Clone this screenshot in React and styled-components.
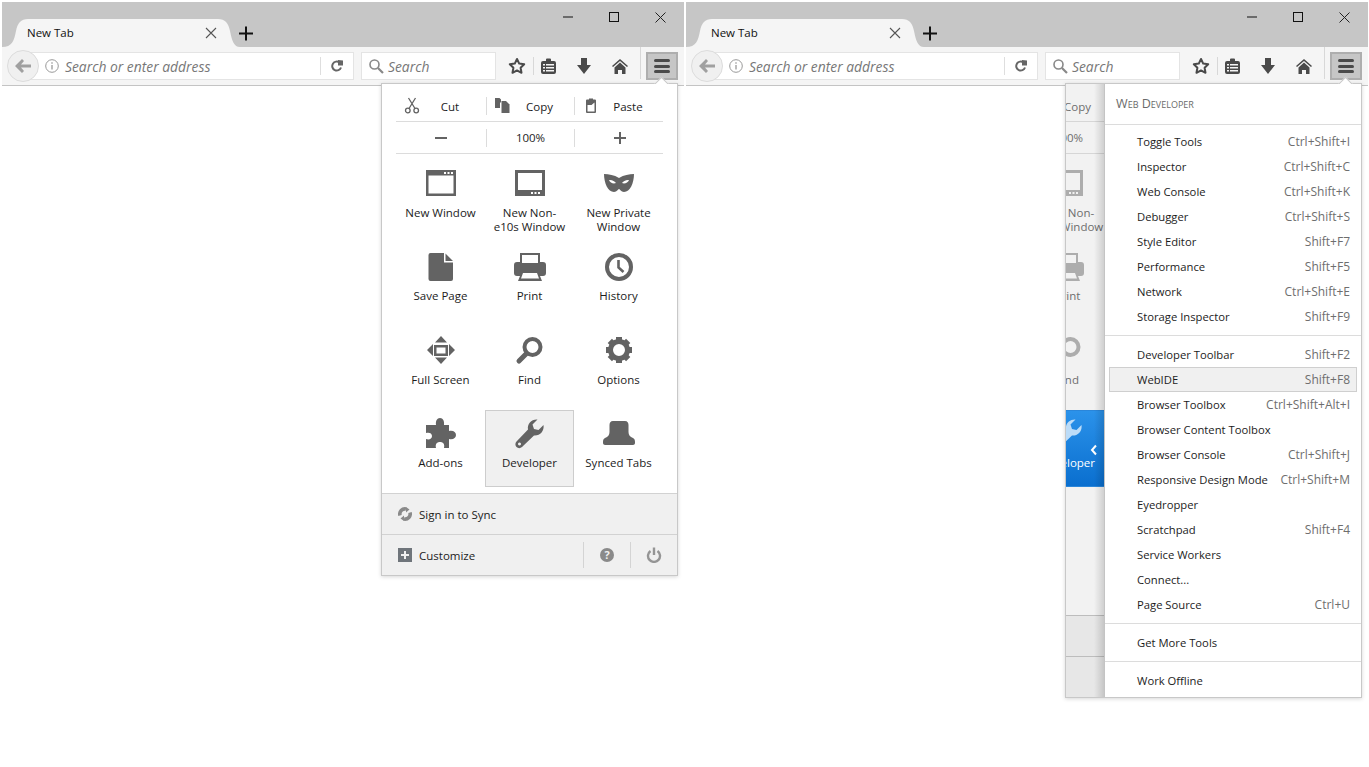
import React from "react";
import styled, { createGlobalStyle } from "styled-components";

const Global = createGlobalStyle`
  html, body { margin: 0; padding: 0; background: #fff; }
  body { font-family: "Open Sans", "Noto Sans", "Liberation Sans", sans-serif; font-size: 11.5px; color: #1c1c1c; overflow: hidden; }
  * { box-sizing: border-box; }
`;

const Page = styled.div`
  display: flex;
  gap: 2px;
  padding: 2px 0 0 2px;
  width: 1369px;
  height: 767px;
`;
const Win = styled.div`
  position: relative;
  width: 682px;
  height: 84px;
`;
const TitleBar = styled.div`
  display: flex;
  height: 45px;
  background: #c6c6c6;
`;
const Tab = styled.div`
  position: relative;
  align-self: flex-end;
  width: 237px;
  height: 28px;
  display: flex;
  align-items: center;
  justify-content: space-between;
  padding: 0 22px 1px 25px;
  font-size: 11.5px;
  color: #111;
`;
const TabShape = styled.svg`
  position: absolute;
  left: 0;
  top: 0;
  z-index: 0;
`;
const TabText = styled.span`
  position: relative;
`;
const TabClose = styled.svg`
  position: relative;
  display: block;
`;
const NewTab = styled.svg`
  align-self: flex-end;
  margin: 0 0 6px 0;
  display: block;
`;
const Controls = styled.div`
  margin: 0 1px 0 auto;
  display: flex;
`;
const Ctl = styled.div`
  width: 46px;
  height: 30px;
  display: flex;
  align-items: center;
  justify-content: center;
`;
const Toolbar = styled.div`
  display: flex;
  align-items: flex-start;
  height: 39px;
  padding: 5px 0 0 5px;
  background: #f5f5f5;
  border-bottom: 1px solid #c4c4c4;
`;
const BackBtn = styled.div`
  position: relative;
  z-index: 1;
  width: 32px;
  height: 32px;
  margin: -2px -16px 0 0;
  border-radius: 50%;
  background: #f0f0f0;
  border: 1px solid #dcdcdc;
  display: flex;
  align-items: center;
  justify-content: center;
  color: #a0a0a0;
`;
const Field = styled.div`
  display: flex;
  align-items: center;
  width: ${(p) => p.$w}px;
  height: 28px;
  margin-right: ${(p) => p.$mr}px;
  padding-left: ${(p) => p.$pl}px;
  background: #fff;
  border: 1px solid #e4e4e4;
  font-size: 13.85px;
  font-style: italic;
  color: #777;
`;
const FieldText = styled.span`
  margin-left: ${(p) => p.$ml}px;
  padding-top: 1px;
  flex: 1;
`;
const ReloadSlot = styled.div`
  width: 33px;
  height: 18px;
  border-left: 1px solid #dedede;
  display: flex;
  align-items: center;
  justify-content: center;
`;
const ToolBtn = styled.div`
  width: ${(p) => p.$w}px;
  height: 28px;
  display: flex;
  align-items: center;
  justify-content: center;
  color: #4a4a4a;
`;
const ToolSep = styled.div`
  width: 1px;
  height: ${(p) => p.$h}px;
  margin: ${(p) => p.$m};
  background: #d8d8d8;
  flex: none;
`;
const MenuBtn = styled.div`
  width: 32px;
  height: 28px;
  background: #c6c6c6;
  border: 2px solid #aeaeae;
  display: flex;
  flex-direction: column;
  align-items: center;
  justify-content: center;
  gap: 2.5px;
`;
const Bar = styled.i`
  display: block;
  width: 16px;
  height: 3px;
  border-radius: 1.5px;
  background: #4a4a4a;
`;
const Panel = styled.div`
  position: absolute;
  top: 81px;
  right: 6px;
  width: 297px;
  height: ${(p) => p.$h}px;
  background: #fff;
  border: 1px solid #c8c8c8;
  box-shadow: 0 1px 4px rgba(0, 0, 0, 0.16);
  z-index: 2;
`;
const Arrow = styled.div`
  position: absolute;
  top: -5px;
  right: 10px;
  width: 11px;
  height: 11px;
  background: #fff;
  border-top: 1px solid #c8c8c8;
  border-left: 1px solid #c8c8c8;
  transform: rotate(45deg);
`;
const Clip = styled.div`
  position: relative;
  height: 100%;
  overflow: hidden;
`;
const Main = styled.div`
  width: 295px;
  height: 100%;
  margin-left: ${(p) => (p.$dim ? -146 : 0)}px;
  display: flex;
  flex-direction: column;
  background: ${(p) => (p.$dim ? "#f2f2f2" : "#fff")};
  color: ${(p) => (p.$dim ? "#6e6e6e" : "#1c1c1c")};
  --icon: ${(p) => (p.$dim ? "#adadad" : "#636363")};
  --line: ${(p) => (p.$dim ? "#d6d6d6" : "#dcdcdc")};
`;
const EditRow = styled.div`
  display: grid;
  grid-template-columns: 90px 1px 87px 1px 88px;
  align-items: center;
  margin: ${(p) => p.$mt}px 14px 0;
  height: ${(p) => p.$h}px;
  padding-bottom: ${(p) => p.$pb}px;
  border-bottom: 1px solid var(--line);
`;
const VSep = styled.div`
  height: 18px;
  background: var(--line);
`;
const EditBtn = styled.div`
  display: flex;
  align-items: center;
  padding: 0 6px 0 8px;
  color: inherit;
`;
const EditIcon = styled.svg`
  flex: none;
  display: block;
  color: var(--icon);
`;
const EditLabel = styled.span`
  flex: 1;
  text-align: center;
`;
const ZoomCell = styled.div`
  display: flex;
  justify-content: center;
  padding: 0 ${(p) => p.$pr || 0}px 0 ${(p) => p.$pl || 0}px;
  color: var(--icon);
  font-size: 11.5px;
`;
const ZoomPct = styled.span`
  color: ${(p) => p.$c || "inherit"};
`;
const Grid = styled.div`
  display: grid;
  grid-template-columns: repeat(3, 89px);
  grid-template-rows: 77px 78px 77px 77px;
  row-gap: 6px;
  margin: 6px 14px auto;
`;
const Cell = styled.div`
  position: relative;
  display: flex;
  flex-direction: column;
  align-items: center;
  padding-top: 6px;
  border: 1px solid ${(p) => (p.$active ? (p.$dim ? "#2a86da" : "#cdcdcd") : "transparent")};
  background: ${(p) => (p.$active ? (p.$dim ? "linear-gradient(#2b92ea, #0a6fcf)" : "#f0f0f0") : "transparent")};
  color: ${(p) => (p.$active && p.$dim ? "#fff" : "inherit")};
`;
const BigIcon = styled.svg`
  display: block;
  flex: none;
  margin-bottom: 7px;
  color: ${(p) => (p.$light ? "#bcdcf8" : "var(--icon)")};
`;
const CellLabel = styled.div`
  line-height: 14px;
  text-align: center;
  white-space: pre;
`;
const Chevron = styled.svg`
  position: absolute;
  top: 33px;
  right: 13px;
`;
const Foot = styled.div`
  display: flex;
  align-items: center;
  height: 41px;
  flex: none;
  padding-left: 16px;
  background: ${(p) => (p.$dim ? "#e7e7e7" : "#f0f0f0")};
  border-top: 1px solid ${(p) => (p.$dim ? "#bdbdbd" : "#d2d2d2")};
`;
const FootIcon = styled.svg`
  display: block;
  flex: none;
  margin-right: 7px;
`;
const FootBtn = styled.div`
  width: 47px;
  height: 26px;
  border-left: 1px solid #d4d4d4;
  display: flex;
  align-items: center;
  justify-content: center;
`;
const FootLabel = styled.span`
  margin-right: auto;
`;
const Sub = styled.div`
  position: absolute;
  top: 0;
  bottom: 0;
  left: 38px;
  right: 0;
  background: #fff;
  border-left: 1px solid #c4c4c4;
  font-size: 11.25px;
  &::before {
    content: "";
    position: absolute;
    top: 0;
    bottom: 0;
    left: -11px;
    width: 10px;
    background: linear-gradient(to right, rgba(0, 0, 0, 0), rgba(0, 0, 0, 0.14));
  }
`;
const SubHead = styled.div`
  display: flex;
  align-items: center;
  height: 41px;
  padding: 0 0 2px 11px;
  border-bottom: 1px solid #dcdcdc;
  color: #6a6a6a;
  font-variant: small-caps;
  font-size: 12.6px;
`;
const SubRule = styled.div`
  height: 1px;
  margin: ${(p) => p.$m};
  background: #dcdcdc;
`;
const SubList = styled.div`
  padding-top: ${(p) => p.$pt || 0}px;
`;
const SubItem = styled.div`
  display: flex;
  align-items: center;
  justify-content: space-between;
  height: 25px;
  margin: 0 4px;
  padding: 0 6px 0 27px;
  border: 1px solid ${(p) => (p.$hover ? "#cfcfcf" : "transparent")};
  background: ${(p) => (p.$hover ? "#f0f0f0" : "transparent")};
`;
const Shortcut = styled.span`
  color: #6e6e6e;
  font-size: 12px;
`;

const WindowIcon = () => (
  <BigIcon width="32" height="32" viewBox="0 0 32 32">
    <path fill="currentColor" fillRule="evenodd" d="M1 3h30v26H1zM3.5 8.5v18h25v-18zM19 5v2h2V5zM22.5 5v2h2V5zM26 5v2h2V5z" />
  </BigIcon>
);
const TabletIcon = () => (
  <BigIcon width="32" height="32" viewBox="0 0 32 32">
    <path fill="currentColor" fillRule="evenodd" d="M1 3h30v26H1zM4 6v17h24V6zM17 25v2h2v-2zM20.5 25v2h2v-2zM24 25v2h2v-2z" />
  </BigIcon>
);
const MaskIcon = () => (
  <BigIcon width="32" height="32" viewBox="0 0 32 32">
    <path fill="currentColor" fillRule="evenodd" d="M1 7C6 7 11 8 16 11 21 8 26 7 31 7 31 16 27 25 21 25 18 25 17 22 16 22 15 22 14 25 11 25 5 25 1 16 1 7ZM6 13C7 16 10.500 17 13 16 12 14 8.500 12.500 6 13ZM26 13C23.500 12.500 20 14 19 16 21.500 17 25 16 26 13Z" />
  </BigIcon>
);
const PageIcon = () => (
  <BigIcon width="32" height="32" viewBox="0 -1 32 32">
    <path fill="currentColor" fillRule="evenodd" d="M5.5 2H19v9.5h9V28a2 2 0 0 1-2 2H5.5a2 2 0 0 1-2-2V4a2 2 0 0 1 2-2ZM20.500 2.500l7.500 7.500h-7.500Z" />
  </BigIcon>
);
const PrintIcon = () => (
  <BigIcon width="32" height="32" viewBox="0 -1 32 32">
    <path fill="currentColor" fillRule="evenodd" d="M6 2h20v9h3a3 3 0 0 1 3 3v8a3 3 0 0 1-3 3h-3l2 5H4l2-5H3a3 3 0 0 1-3-3v-8a3 3 0 0 1 3-3h3ZM8 4v8h16V4ZM9 22l-2 5.500h18L23 22Z" />
  </BigIcon>
);
const ClockIcon = () => (
  <BigIcon width="32" height="32" viewBox="0 -1 32 32">
    <circle cx="16" cy="16" r="12" fill="none" stroke="currentColor" strokeWidth="4" />
    <path d="M15.500 9v7.500l5 4.500" fill="none" stroke="currentColor" strokeWidth="2.600" />
  </BigIcon>
);
const FullIcon = () => (
  <BigIcon width="32" height="32" viewBox="0 0 32 32">
    <path fill="currentColor" fillRule="evenodd" d="M16 2l6 6.500H10ZM16 30l-6-6.500h12ZM2 16l6-6v12ZM30 16l-6-6v12ZM9 11h14v11H9ZM11.500 13.500v6h9v-6Z" />
  </BigIcon>
);
const FindIcon = () => (
  <BigIcon width="32" height="32" viewBox="0 0 32 32">
    <circle cx="18.500" cy="13" r="8" fill="none" stroke="currentColor" strokeWidth="4" />
    <path d="M12.500 19.500 5 27" fill="none" stroke="currentColor" strokeWidth="5" strokeLinecap="round" />
  </BigIcon>
);
const GearIcon = () => (
  <BigIcon width="32" height="32" viewBox="0 0 32 32">
    <circle cx="16" cy="16" r="8.500" fill="none" stroke="currentColor" strokeWidth="5" />
    {[0, 45, 90, 135, 180, 225, 270, 315].map((a) => (
      <rect key={a} x="13" y="3" width="6" height="5" fill="currentColor" transform={`rotate(${a} 16 16)`} />
    ))}
  </BigIcon>
);
const PuzzleIcon = () => (
  <BigIcon width="32" height="32" viewBox="0 0 32 32">
    <path fill="currentColor" d="M1 8H11C10.500 4 12 1 15 1 18 1 19.500 4 19 8H24V14C28 13 31 15 31 18 31 21 28 23 24 22V31H19C20 27 18 25 15 25 12 25 10 27 11 31H1V22C4 23 7 22 7 19 7 16 4 15 1 16Z" />
  </BigIcon>
);
const WrenchIcon = ({ light }) => (
  <BigIcon $light={light} width="32" height="32" viewBox="0 0 32 32">
    <path fill="currentColor" fillRule="evenodd" d="M29.500 8C30.500 14 26 19 20 18.500L8 30C6.500 31.500 4 31.500 2.500 30 1 28.500 1 26 2.500 24.500L14 12.500C13 7 17.500 2 23.500 2.500L18.500 7.500 20 12 24.500 13ZM5.500 25.500a1.500 1.500 0 1 0 0.010 0Z" />
  </BigIcon>
);
const SyncedIcon = () => (
  <BigIcon width="32" height="32" viewBox="0 0 32 32">
    <path fill="currentColor" d="M10 4H22C24.500 4 25.500 6 25.500 8V15C25.500 18 27 20 30 21 31.500 21.800 32 23 32 25V26C32 27.300 31 28 30 28H2C1 28 0 27.300 0 26V25C0 23 .5 21.800 2 21 5 20 6.500 18 6.500 15V8C6.500 6 7.500 4 10 4Z" />
  </BigIcon>
);

const items = [
  ["New Window", WindowIcon],
  ["New Non-\ne10s Window", TabletIcon],
  ["New Private\nWindow", MaskIcon],
  ["Save Page", PageIcon],
  ["Print", PrintIcon],
  ["History", ClockIcon],
  ["Full Screen", FullIcon],
  ["Find", FindIcon],
  ["Options", GearIcon],
  ["Add-ons", PuzzleIcon],
  ["Developer", WrenchIcon],
  ["Synced Tabs", SyncedIcon],
];

const MainView = ({ dim }) => (
  <Main $dim={dim}>
    <EditRow $mt={12} $h={26} $pb={5}>
      <EditBtn>
        <EditIcon width="16" height="18" viewBox="0 0 16 18">
          <g fill="none" stroke="currentColor" strokeWidth="1.300">
            <path d="M4.500 1l6.500 10.500M11.500 1L5 11.500" />
            <circle cx="3.800" cy="13.500" r="2.300" />
            <circle cx="12.200" cy="13.500" r="2.300" />
          </g>
        </EditIcon>
        <EditLabel>Cut</EditLabel>
      </EditBtn>
      <VSep />
      <EditBtn>
        <EditIcon width="16" height="18" viewBox="0 0 16 18">
          <path fill="currentColor" d="M0 1h4.500l1.500 1.500V5L5 6v5H0Z" />
          <path fill="currentColor" d="M6.500 4H11l3.500 3.500V16h-8Z" />
        </EditIcon>
        <EditLabel>Copy</EditLabel>
      </EditBtn>
      <VSep />
      <EditBtn>
        <EditIcon width="16" height="18" viewBox="0 0 16 18">
          <path fill="currentColor" fillRule="evenodd" d="M3 3.500a1 1 0 0 1 1-1h2V1.500h4v1h2a1 1 0 0 1 1 1V15a1 1 0 0 1-1 1H4a1 1 0 0 1-1-1ZM4.500 8v6.500h7V5.500l-3 2.500Z" />
        </EditIcon>
        <EditLabel>Paste</EditLabel>
      </EditBtn>
    </EditRow>
    <EditRow $mt={0} $h={32} $pb={0}>
      <ZoomCell $pr={1}>
        <svg width="12" height="2" viewBox="0 0 12 2"><rect width="12" height="2" fill="currentColor" /></svg>
      </ZoomCell>
      <VSep />
      <ZoomCell>
        <ZoomPct $c={dim ? "#6e6e6e" : "#1c1c1c"}>100%</ZoomPct>
      </ZoomCell>
      <VSep />
      <ZoomCell $pl={1}>
        <svg width="12" height="12" viewBox="0 0 12 12"><path d="M0 6h12M6 0v12" stroke="currentColor" strokeWidth="2" /></svg>
      </ZoomCell>
    </EditRow>
    <Grid>
      {items.map(([label, Icon]) => {
        const active = label === "Developer";
        return (
          <Cell key={label} $active={active} $dim={dim}>
            <Icon light={active && dim} />
            <CellLabel>{label}</CellLabel>
            {active && dim && (
              <Chevron width="8" height="12" viewBox="0 0 8 12">
                <path d="M6 1.500L2 6l4 4.500" fill="none" stroke="#fff" strokeWidth="2" />
              </Chevron>
            )}
          </Cell>
        );
      })}
    </Grid>
    <Foot $dim={dim}>
      <FootIcon width="14" height="14" viewBox="0 0 14 14">
        <path fill="none" stroke="#8a8a8a" strokeWidth="3.600" d="M2 8.500A5.200 5.200 0 0 1 8 2M12 5.500A5.200 5.200 0 0 1 6 12" />
        <path fill="#8a8a8a" d="M8 0l3.500 2.500L8 5.500ZM6 14l-3.500-2.500L6 8.500Z" />
      </FootIcon>
      <FootLabel>Sign in to Sync</FootLabel>
    </Foot>
    <Foot $dim={dim}>
      <FootIcon width="14" height="14" viewBox="0 0 14 14">
        <path fill="#6f757b" fillRule="evenodd" d="M0 0h14v14H0ZM6 3v3H3v2h3v3h2V8h3V6H8V3Z" />
      </FootIcon>
      <FootLabel>Customize</FootLabel>
      <FootBtn>
        <svg width="14" height="14" viewBox="0 0 14 14">
          <circle cx="7" cy="7" r="7" fill="#8a8a8a" />
          <text x="7" y="11" textAnchor="middle" fontSize="11" fontWeight="700" fontFamily="Open Sans" fill="#f0f0f0">?</text>
        </svg>
      </FootBtn>
      <FootBtn>
        <svg width="16" height="16" viewBox="0 0 16 16">
          <path fill="none" stroke="#959595" strokeWidth="2.400" d="M4.500 4A6 6 0 1 0 11.500 4M8 0.500V8" />
        </svg>
      </FootBtn>
    </Foot>
  </Main>
);

const dev = [
  [
    ["Toggle Tools", "Ctrl+Shift+I"],
    ["Inspector", "Ctrl+Shift+C"],
    ["Web Console", "Ctrl+Shift+K"],
    ["Debugger", "Ctrl+Shift+S"],
    ["Style Editor", "Shift+F7"],
    ["Performance", "Shift+F5"],
    ["Network", "Ctrl+Shift+E"],
    ["Storage Inspector", "Shift+F9"],
  ],
  [
    ["Developer Toolbar", "Shift+F2"],
    ["WebIDE", "Shift+F8"],
    ["Browser Toolbox", "Ctrl+Shift+Alt+I"],
    ["Browser Content Toolbox", ""],
    ["Browser Console", "Ctrl+Shift+J"],
    ["Responsive Design Mode", "Ctrl+Shift+M"],
    ["Eyedropper", ""],
    ["Scratchpad", "Shift+F4"],
    ["Service Workers", ""],
    ["Connect...", ""],
    ["Page Source", "Ctrl+U"],
  ],
  [["Get More Tools", ""]],
  [["Work Offline", ""]],
];

const Row = ({ row }) => (
  <SubItem $hover={row[0] === "WebIDE"}>
    <span>{row[0]}</span>
    <Shortcut>{row[1]}</Shortcut>
  </SubItem>
);

const SubView = () => (
  <Sub>
    <SubHead>Web Developer</SubHead>
    {dev.map((group, i) => (
      <React.Fragment key={i}>
        <SubList $pt={i === 0 ? 4 : 6}>
          {group.map((r) => (
            <Row key={r[0]} row={r} />
          ))}
        </SubList>
        {i < dev.length - 1 && <SubRule $m="6px 0 0" />}
      </React.Fragment>
    ))}
  </Sub>
);

const Chrome = () => (
  <>
    <TitleBar>
      <Tab>
        <TabShape width="238" height="28" viewBox="0 0 238 28">
          <path fill="#f5f5f5" d="M0 28C10 28 12 22 14 12 15.500 4 19 0 26 0H216C223 0 226.500 4 228 12 230 22 232 28 238 28Z" />
        </TabShape>
        <TabText>New Tab</TabText>
        <TabClose width="12" height="12" viewBox="0 0 12 12">
          <path d="M1 1l10 10M11 1L1 11" stroke="#555" strokeWidth="1.100" />
        </TabClose>
      </Tab>
      <NewTab width="15" height="15" viewBox="0 0 15 15">
        <path d="M0 7.500h14M7 .5v14" stroke="#111" strokeWidth="2" />
      </NewTab>
      <Controls>
        <Ctl>
          <svg width="10" height="10" viewBox="0 0 10 10"><path d="M0 5h10" stroke="#111" strokeWidth="1" /></svg>
        </Ctl>
        <Ctl>
          <svg width="10" height="10" viewBox="0 0 10 10"><rect x=".5" y=".5" width="9" height="9" fill="none" stroke="#111" /></svg>
        </Ctl>
        <Ctl>
          <svg width="11" height="11" viewBox="0 0 11 11"><path d="M.5 .5l10 10M10.500 .5l-10 10" stroke="#222" strokeWidth="1" /></svg>
        </Ctl>
      </Controls>
    </TitleBar>
    <Toolbar>
      <BackBtn>
        <svg width="16" height="14" viewBox="0 0 16 14">
          <path fill="currentColor" d="M7 0l2 2-3 3.500h10v3H6l3 3.500-2 2L0 7Z" />
        </svg>
      </BackBtn>
      <Field $w={331} $mr={7} $pl={21}>
        <svg width="14" height="14" viewBox="0 0 14 14">
          <circle cx="7" cy="7" r="6.300" fill="none" stroke="#999" />
          <path d="M7 6v4.500M7 3.200v1.500" stroke="#999" strokeWidth="1.300" />
        </svg>
        <FieldText $ml={6}>Search or enter address</FieldText>
        <ReloadSlot>
          <svg width="12" height="12" viewBox="0 0 12 12">
            <path fill="none" stroke="#666" strokeWidth="2" d="M10 7.500A4.500 4.500 0 1 1 8.500 2.500" />
            <path fill="#666" d="M7 0v5.500h5V.5Z" />
          </svg>
        </ReloadSlot>
      </Field>
      <Field $w={135} $mr={4} $pl={7}>
        <svg width="15" height="15" viewBox="0 0 15 15">
          <circle cx="5.500" cy="5.500" r="4.500" fill="none" stroke="#888" strokeWidth="1.600" />
          <path d="M9 9l5 5" stroke="#888" strokeWidth="2.200" />
        </svg>
        <FieldText $ml={4}>Search</FieldText>
      </Field>
      <ToolBtn $w={33}>
        <svg width="18" height="18" viewBox="0 0 18 18">
          <path fill="none" stroke="#4a4a4a" strokeWidth="2" strokeLinejoin="round" d="M9 2l2.200 4.600 5 .7-3.600 3.500.9 5L9 13.400 4.500 15.800l.9-5L1.800 7.300l5-.7Z" />
        </svg>
      </ToolBtn>
      <ToolSep $h={18} $m="5px 0 0" />
      <ToolBtn $w={28}>
        <svg width="15" height="16" viewBox="0 0 15 16">
          <path fill="#4a4a4a" fillRule="evenodd" d="M2 3h3V1.500a1 1 0 0 1 1-1h3a1 1 0 0 1 1 1V3h3a2 2 0 0 1 2 2v9a2 2 0 0 1-2 2H2a2 2 0 0 1-2-2V5a2 2 0 0 1 2-2ZM2 6v1.500h2V6ZM5 6v1.500h8V6ZM2 9v1.500h2V9ZM5 9v1.500h8V9ZM2 12v1.500h2V12ZM5 12v1.500h8V12Z" />
        </svg>
      </ToolBtn>
      <ToolBtn $w={44}>
        <svg width="14" height="16" viewBox="0 0 14 16"><path fill="#4a4a4a" d="M4 0h6v7h4l-7 9-7-9h4Z" /></svg>
      </ToolBtn>
      <ToolBtn $w={28}>
        <svg width="16" height="15" viewBox="0 0 16 15">
          <path fill="#4a4a4a" d="M8 0l8 7-1 1-7-6-7 6-1-1Z" />
          <path fill="#4a4a4a" d="M8 3.500l5.500 5V15h-3.500v-4H6v4H2.500V8.500Z" />
        </svg>
      </ToolBtn>
      <ToolSep $h={32} $m="-5px 5px 0 6px" />
      <MenuBtn>
        <Bar />
        <Bar />
        <Bar />
      </MenuBtn>
    </Toolbar>
  </>
);

export default function App() {
  return (
    <Page>
      <Global />
      <Win>
        <Chrome />
        <Panel $h={493}>
          <Arrow />
          <Clip>
            <MainView />
          </Clip>
        </Panel>
      </Win>
      <Win>
        <Chrome />
        <Panel $h={615}>
          <Arrow />
          <Clip>
            <MainView dim />
            <SubView />
          </Clip>
        </Panel>
      </Win>
    </Page>
  );
}
